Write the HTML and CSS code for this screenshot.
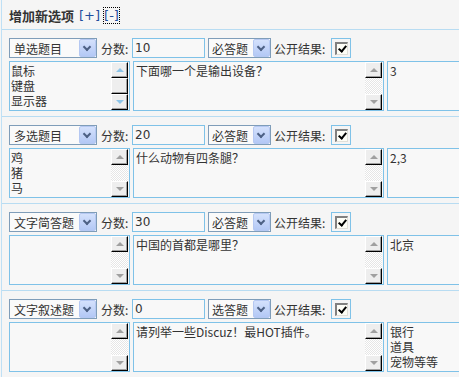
FILE: index.html
```html
<!DOCTYPE html>
<html lang="zh-CN">
<head>
    <meta charset="UTF-8">
    <title>增加新选项</title>
    <link rel="stylesheet" href="styles.css">
</head>
<body>
    <div class="panel">
        <div class="panel-head">
            <span class="panel-title">增加新选项</span>
            <a class="head-link">[+]</a>
            <a class="head-link focused">[-]</a>
        </div>

        <!-- question 1 -->
        <div class="item">
            <div class="item-top">
                <div class="dropdown type-select"><span>单选题目</span><i class="drop-btn"></i></div>
                <label class="lbl lbl-score">分数:</label>
                <div class="field score">10</div>
                <div class="dropdown req-select"><span>必答题</span><i class="drop-btn"></i></div>
                <label class="lbl lbl-public">公开结果:</label>
                <div class="check-wrap"><i class="check on"></i></div>
            </div>
            <div class="item-body">
                <div class="field box options">
                    <div class="box-text">鼠标<br>键盘<br>显示器</div>
                    <div class="scroll active">
                        <i class="sb-btn up"></i><i class="sb-btn thumb"></i><i class="sb-btn down"></i>
                    </div>
                </div>
                <div class="field box question">
                    <div class="box-text">下面哪一个是输出设备？</div>
                    <div class="scroll">
                        <i class="sb-btn up"></i><i class="sb-track"></i><i class="sb-btn down"></i>
                    </div>
                </div>
                <div class="field box answer"><div class="box-text">3</div></div>
            </div>
        </div>

        <!-- question 2 -->
        <div class="item">
            <div class="item-top">
                <div class="dropdown type-select"><span>多选题目</span><i class="drop-btn"></i></div>
                <label class="lbl lbl-score">分数:</label>
                <div class="field score">20</div>
                <div class="dropdown req-select"><span>必答题</span><i class="drop-btn"></i></div>
                <label class="lbl lbl-public">公开结果:</label>
                <div class="check-wrap"><i class="check on"></i></div>
            </div>
            <div class="item-body">
                <div class="field box options">
                    <div class="box-text">鸡<br>猪<br>马</div>
                    <div class="scroll">
                        <i class="sb-btn up"></i><i class="sb-track"></i><i class="sb-btn down"></i>
                    </div>
                </div>
                <div class="field box question">
                    <div class="box-text">什么动物有四条腿？</div>
                    <div class="scroll">
                        <i class="sb-btn up"></i><i class="sb-track"></i><i class="sb-btn down"></i>
                    </div>
                </div>
                <div class="field box answer"><div class="box-text">2,3</div></div>
            </div>
        </div>

        <!-- question 3 -->
        <div class="item">
            <div class="item-top">
                <div class="dropdown type-select"><span>文字简答题</span><i class="drop-btn"></i></div>
                <label class="lbl lbl-score">分数:</label>
                <div class="field score">30</div>
                <div class="dropdown req-select"><span>必答题</span><i class="drop-btn"></i></div>
                <label class="lbl lbl-public">公开结果:</label>
                <div class="check-wrap"><i class="check on"></i></div>
            </div>
            <div class="item-body">
                <div class="field box options">
                    <div class="box-text"></div>
                    <div class="scroll">
                        <i class="sb-btn up"></i><i class="sb-track"></i><i class="sb-btn down"></i>
                    </div>
                </div>
                <div class="field box question">
                    <div class="box-text">中国的首都是哪里？</div>
                    <div class="scroll">
                        <i class="sb-btn up"></i><i class="sb-track"></i><i class="sb-btn down"></i>
                    </div>
                </div>
                <div class="field box answer"><div class="box-text">北京</div></div>
            </div>
        </div>

        <!-- question 4 -->
        <div class="item">
            <div class="item-top">
                <div class="dropdown type-select"><span>文字叙述题</span><i class="drop-btn"></i></div>
                <label class="lbl lbl-score">分数:</label>
                <div class="field score">0</div>
                <div class="dropdown req-select"><span>选答题</span><i class="drop-btn"></i></div>
                <label class="lbl lbl-public">公开结果:</label>
                <div class="check-wrap"><i class="check on"></i></div>
            </div>
            <div class="item-body">
                <div class="field box options">
                    <div class="box-text"></div>
                    <div class="scroll">
                        <i class="sb-btn up"></i><i class="sb-track"></i><i class="sb-btn down"></i>
                    </div>
                </div>
                <div class="field box question">
                    <div class="box-text">请列举一些Discuz！最HOT插件。</div>
                    <div class="scroll">
                        <i class="sb-btn up"></i><i class="sb-track"></i><i class="sb-btn down"></i>
                    </div>
                </div>
                <div class="field box answer"><div class="box-text">银行<br>道具<br>宠物等等</div></div>
            </div>
        </div>
    </div>
</body>
</html>
```

FILE: styles.css
```css
body {
    margin: 0;
    background-color: #F5F5F5;
    color: #333333;
    font-family: "DejaVu Sans", "Noto Sans CJK SC", sans-serif;
    font-size: 12px;
    overflow: hidden;
    width: 459px;
    height: 377px;
}

.panel {
    margin-left: 1px;
    border-left: 1px solid #BFE0F5;
    min-height: 377px;
}

.panel-head {
    height: 29px;
    display: flex;
    align-items: center;
    padding-left: 7px;
    padding-top: 1px;
    box-sizing: border-box;
}

.panel-title {
    font-family: "Noto Sans CJK SC", sans-serif;
    font-weight: bold;
    font-size: 13px;
    margin-right: 5px;
}

.head-link {
    color: #1F4E9C;
    font-family: "DejaVu Sans", sans-serif;
    font-size: 13px;
    margin-right: 4px;
}

.head-link.focused {
    outline: 1px dotted #000000;
}

/* each question */
.item {
    border-top: 1px solid #B8DCF2;
    padding: 8px 0 5px 7px;
}

.item-top {
    display: flex;
    height: 20px;
    margin-bottom: 3px;
}

.item-top > * {
    flex-shrink: 0;
}

.item-body {
    display: flex;
    height: 50px;
    gap: 3px;
}

.dropdown {
    box-sizing: border-box;
    height: 20px;
    border: 1px solid #7F9DB9;
    background-color: #FAFAFA;
    display: flex;
    align-items: center;
    justify-content: space-between;
    padding-left: 4px;
    font-family: "Noto Sans CJK SC", sans-serif;
    font-size: 12px;
}

.type-select {
    width: 88px;
}

.req-select {
    width: 63px;
    padding-left: 3px;
}

.drop-btn {
    width: 17px;
    height: 18px;
    box-sizing: border-box;
    border: 1px solid #B5C8F2;
    border-radius: 2px;
    background: linear-gradient(#D4E1FC, #B3C8F5);
    position: relative;
}

.drop-btn::after {
    content: "";
    position: absolute;
    left: 4px;
    top: 4px;
    width: 4px;
    height: 4px;
    border-right: 2px solid #4D6185;
    border-bottom: 2px solid #4D6185;
    transform: rotate(45deg);
}

.lbl {
    display: flex;
    align-items: center;
    font-family: "Noto Sans CJK SC", sans-serif;
    color: #333333;
}

.lbl-score {
    width: 35px;
    padding-left: 4px;
    box-sizing: border-box;
}

.lbl-public {
    width: 60px;
    padding-left: 3px;
    box-sizing: border-box;
}

.field {
    box-sizing: border-box;
    border: 1px solid #7FC2E8;
    background-color: #F8F8F8;
}

.score {
    width: 73px;
    margin-right: 3px;
    padding-left: 2px;
    line-height: 18px;
}

.check-wrap {
    box-sizing: border-box;
    width: 20px;
    height: 20px;
    border: 1px solid #7FC2E8;
    display: flex;
    align-items: center;
    justify-content: center;
}

.check {
    width: 13px;
    height: 13px;
    box-sizing: border-box;
    border-top: 2px solid #808080;
    border-left: 2px solid #808080;
    border-right: 1px solid #E0DFD8;
    border-bottom: 1px solid #E0DFD8;
    background-color: #FDFDF6;
    position: relative;
}

.check.on::after {
    content: "";
    position: absolute;
    left: 3px;
    top: 0px;
    width: 3px;
    height: 6px;
    border-right: 2px solid #000000;
    border-bottom: 2px solid #000000;
    transform: rotate(40deg);
}

/* multi-line boxes */
.box {
    display: flex;
    height: 50px;
    flex-shrink: 0;
}

.box-text {
    flex: 1;
    line-height: 15px;
    padding: 1px 0 0 1px;
    font-family: "Noto Sans CJK SC", sans-serif;
}

.options {
    width: 121px;
}

.question {
    width: 251px;
}

.question .box-text {
    padding-left: 2px;
}

/* answer box runs off the right edge, so no right border shows */
.answer {
    flex: 1;
    flex-shrink: 1;
    min-width: 0;
    border-right: none;
}

.answer .box-text {
    padding-left: 2px;
}

.scroll {
    width: 17px;
    display: flex;
    flex-direction: column;
    margin-right: 1px;
}

.sb-btn {
    height: 16px;
    box-sizing: border-box;
    background-color: #EEEEEE;
    border-top: 1px solid #FFFFFF;
    border-left: 1px solid #FFFFFF;
    border-right: 1px solid #000000;
    border-bottom: 1px solid #000000;
    box-shadow: inset -1px -1px 0 #A0A0A0;
    position: relative;
}

.sb-track {
    flex: 1;
    background-color: #F4F4F4;
    background-image: repeating-conic-gradient(#FFFFFF 0 25%, #E6E6E6 0 50%);
    background-size: 2px 2px;
}

.thumb {
    flex: 1;
}

.up::after,
.down::after {
    content: "";
    position: absolute;
    left: 4px;
    width: 0;
    height: 0;
    border-left: 4px solid transparent;
    border-right: 4px solid transparent;
}

.up::after {
    top: 5px;
    border-bottom: 4px solid #A0A0A0;
}

.down::after {
    top: 5px;
    border-top: 4px solid #A0A0A0;
}

.scroll.active .up::after {
    border-bottom-color: #8CC4E8;
}

.scroll.active .down::after {
    border-top-color: #8CC4E8;
}
```
